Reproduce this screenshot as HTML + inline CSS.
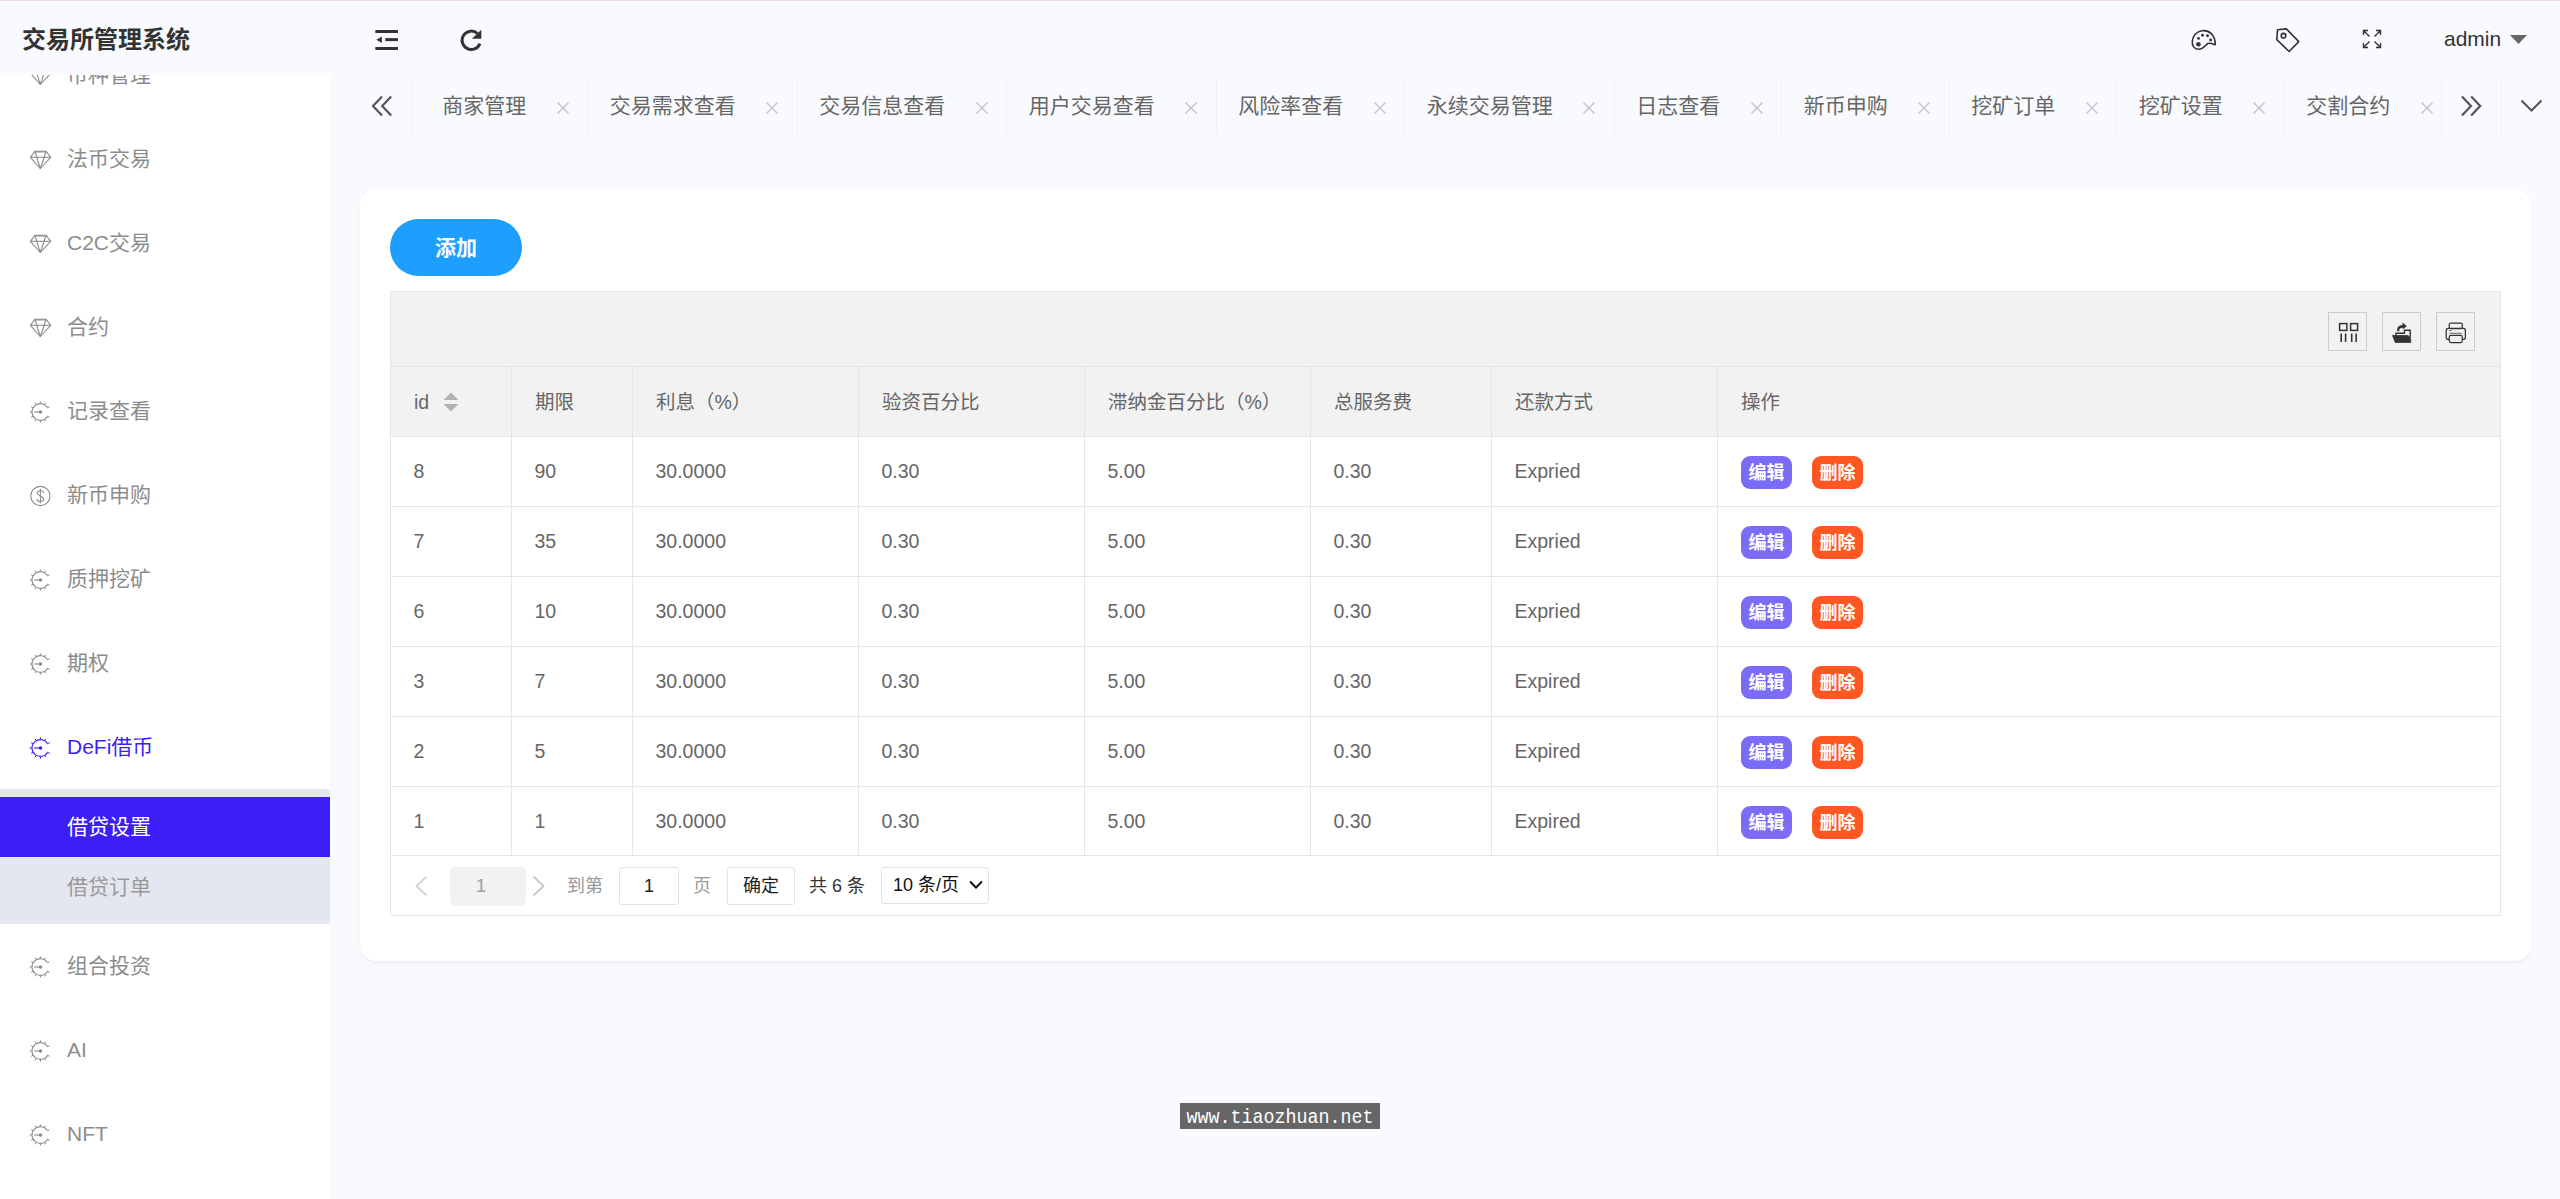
<!DOCTYPE html><html lang="zh-CN"><head><meta charset="utf-8"><title>交易所管理系统</title><style>
*{box-sizing:border-box;margin:0;padding:0}
html,body{width:2560px;height:1199px;overflow:hidden}
body{background:#f9fafe;font-family:"Liberation Sans", "Noto Sans CJK SC", sans-serif;font-size:21px;color:#666;position:relative}
.abs{position:absolute}
#topline{left:0;top:0;width:2560px;height:1px;background:#f1dcdf}
#side{left:0;top:75px;width:330px;height:1124px;background:#fff;overflow:hidden}
#logo{left:22px;top:21.5px;height:36px;line-height:36px;font-size:24px;font-weight:700;color:#333;white-space:nowrap}
.mi{position:absolute;left:0;width:330px;height:84px;line-height:84px;color:#8c8c8c;font-size:21px;white-space:nowrap}
.mi .tx{position:absolute;left:67px;top:0}
.mi svg{position:absolute;left:28px;top:30px;width:24px;height:24px;overflow:visible}
.mi.on{color:#3c1ff5}
#sub{left:0;top:714px;width:330px;height:135px;background:#e4e7f0;border-radius:0 3px 3px 0}
#sub .it{position:absolute;left:0;width:330px;height:60px;line-height:60px;padding-left:67px;font-size:21px;color:#999;white-space:nowrap}
#sub .it.act{background:#3c1ff5;color:#fff}
.tab{position:absolute;top:76px;height:59px;line-height:59px;font-size:21px;color:#666;white-space:nowrap}
.vl{position:absolute;top:76px;height:59px;width:1px;background:#f2f2f5}
.cx{position:absolute;top:102px;width:12px;height:12px}
#card{left:360px;top:189px;width:2171px;height:772px;background:#fff;border-radius:16px;box-shadow:0 1.5px 3px rgba(0,0,0,.05)}
#add{left:390px;top:219px;width:132px;height:57px;border-radius:29px;background:#1e9fff;color:#fff;font-size:21px;font-weight:700;text-align:center;line-height:57px}
#tbl{left:390px;top:291px;width:2111px;height:625px;border:1px solid #e6e6e6;background:#fff}
.hl{position:absolute;left:391px;width:2109px;height:1px;background:#e6e6e6}
.cl{position:absolute;top:366px;width:1px;height:489px;background:#e6e6e6}
#thbg{left:391px;top:292px;width:2109px;height:144px;background:#f2f2f2}
.c{position:absolute;height:70px;line-height:70px;font-size:19.5px;color:#666;white-space:nowrap}
.btn{position:absolute;width:51px;height:33px;border-radius:9px;color:#fff;font-size:18px;font-weight:700;text-align:center;line-height:34px;white-space:nowrap}
.be{background:#7a6cf6}
.bd{background:#ff5722}
.tool{position:absolute;top:312px;width:39px;height:39px;border:1px solid #ccc}
.tool svg{position:absolute;left:-1px;top:-1px;width:39px;height:39px}
.pg{position:absolute;font-size:18px;white-space:nowrap;height:38px;line-height:38px;top:867px}
#wm{left:1180px;top:1103px;width:200px;height:26px;background:#666;overflow:hidden}
#wm span{position:absolute;left:0;top:2.5px;width:200px;height:26px;color:#fff;font-family:"Liberation Mono",monospace;font-size:18.33px;line-height:26px;text-align:center;white-space:nowrap;transform:scaleY(1.15);transform-origin:50% 70%}
</style></head><body>
<div id="topline" class="abs"></div>
<div id="logo" class="abs">交易所管理系统</div>
<div id="side" class="abs">
<div class="mi" style="top:-42px"><svg viewBox="0 0 24 24" fill="none" stroke="currentColor" stroke-width="1.1" stroke-linejoin="round"><path d="M6.900 4.300H18.150L22.700 10.300 12.300 21.500 2.400 10.300z"/><path d="M6.900 4.900H18.150" stroke-width="1.2"/><path d="M2.400 10.300H22.700"/><path d="M6.900 4.300L12.300 21.500 18.150 4.300"/></svg><span class="tx">币种管理</span></div>
<div class="mi" style="top:42px"><svg viewBox="0 0 24 24" fill="none" stroke="currentColor" stroke-width="1.1" stroke-linejoin="round"><path d="M6.900 4.300H18.150L22.700 10.300 12.300 21.500 2.400 10.300z"/><path d="M6.900 4.900H18.150" stroke-width="1.2"/><path d="M2.400 10.300H22.700"/><path d="M6.900 4.300L12.300 21.500 18.150 4.300"/></svg><span class="tx">法币交易</span></div>
<div class="mi" style="top:126px"><svg viewBox="0 0 24 24" fill="none" stroke="currentColor" stroke-width="1.1" stroke-linejoin="round"><path d="M6.900 4.300H18.150L22.700 10.300 12.300 21.500 2.400 10.300z"/><path d="M6.900 4.900H18.150" stroke-width="1.2"/><path d="M2.400 10.300H22.700"/><path d="M6.900 4.300L12.300 21.500 18.150 4.300"/></svg><span class="tx">C2C交易</span></div>
<div class="mi" style="top:210px"><svg viewBox="0 0 24 24" fill="none" stroke="currentColor" stroke-width="1.1" stroke-linejoin="round"><path d="M6.900 4.300H18.150L22.700 10.300 12.300 21.500 2.400 10.300z"/><path d="M6.900 4.900H18.150" stroke-width="1.2"/><path d="M2.400 10.300H22.700"/><path d="M6.900 4.300L12.300 21.500 18.150 4.300"/></svg><span class="tx">合约</span></div>
<div class="mi" style="top:294px"><svg viewBox="0 0 24 24" fill="none" stroke="currentColor" stroke-width="1.1"><path d="M19.67 17.20A8.4 8.4 0 1 1 19.67 8.80"/><path d="M19.67 17.20L21.67 18.35M16.60 20.27L17.75 22.27M12.40 21.40L12.40 23.70M8.20 20.27L7.05 22.27M5.13 17.20L3.13 18.35M4.00 13.00L1.70 13.00M5.13 8.80L3.13 7.65M8.20 5.73L7.05 3.73M12.40 4.60L12.40 2.30M16.60 5.73L17.75 3.73M19.67 8.80L21.67 7.65" stroke-width="1"/><path d="M6.10 13.0H12.4" stroke-width="1.5" opacity=".75"/><circle cx="12.5" cy="13.0" r="1.8" fill="currentColor" stroke="none"/></svg><span class="tx">记录查看</span></div>
<div class="mi" style="top:378px"><svg viewBox="0 0 24 24" fill="none" stroke="currentColor" stroke-width="1.1"><circle cx="12.4" cy="13" r="9.650"/><g transform="translate(12.4 13)"><path d="M3.100 -2.900C3.100 -4.500 1.700 -5.300 0 -5.300C-1.800 -5.300 -3.100 -4.400 -3.100 -2.900C-3.100 -1.100 -1.300 -0.600 0 0C1.700 0.800 3.300 1.400 3.300 3.100C3.300 4.700 1.800 5.500 0 5.500C-1.800 5.500 -3.300 4.700 -3.300 2.900"/><path d="M0 -7.100V7.400" stroke-width="1"/></g></svg><span class="tx">新币申购</span></div>
<div class="mi" style="top:462px"><svg viewBox="0 0 24 24" fill="none" stroke="currentColor" stroke-width="1.1"><path d="M19.67 17.20A8.4 8.4 0 1 1 19.67 8.80"/><path d="M19.67 17.20L21.67 18.35M16.60 20.27L17.75 22.27M12.40 21.40L12.40 23.70M8.20 20.27L7.05 22.27M5.13 17.20L3.13 18.35M4.00 13.00L1.70 13.00M5.13 8.80L3.13 7.65M8.20 5.73L7.05 3.73M12.40 4.60L12.40 2.30M16.60 5.73L17.75 3.73M19.67 8.80L21.67 7.65" stroke-width="1"/><path d="M6.10 13.0H12.4" stroke-width="1.5" opacity=".75"/><circle cx="12.5" cy="13.0" r="1.8" fill="currentColor" stroke="none"/></svg><span class="tx">质押挖矿</span></div>
<div class="mi" style="top:546px"><svg viewBox="0 0 24 24" fill="none" stroke="currentColor" stroke-width="1.1"><path d="M19.67 17.20A8.4 8.4 0 1 1 19.67 8.80"/><path d="M19.67 17.20L21.67 18.35M16.60 20.27L17.75 22.27M12.40 21.40L12.40 23.70M8.20 20.27L7.05 22.27M5.13 17.20L3.13 18.35M4.00 13.00L1.70 13.00M5.13 8.80L3.13 7.65M8.20 5.73L7.05 3.73M12.40 4.60L12.40 2.30M16.60 5.73L17.75 3.73M19.67 8.80L21.67 7.65" stroke-width="1"/><path d="M6.10 13.0H12.4" stroke-width="1.5" opacity=".75"/><circle cx="12.5" cy="13.0" r="1.8" fill="currentColor" stroke="none"/></svg><span class="tx">期权</span></div>
<div class="mi on" style="top:630px"><svg viewBox="0 0 24 24" fill="none" stroke="currentColor" stroke-width="1.1"><path d="M19.67 17.20A8.4 8.4 0 1 1 19.67 8.80"/><path d="M19.67 17.20L21.67 18.35M16.60 20.27L17.75 22.27M12.40 21.40L12.40 23.70M8.20 20.27L7.05 22.27M5.13 17.20L3.13 18.35M4.00 13.00L1.70 13.00M5.13 8.80L3.13 7.65M8.20 5.73L7.05 3.73M12.40 4.60L12.40 2.30M16.60 5.73L17.75 3.73M19.67 8.80L21.67 7.65" stroke-width="1"/><path d="M6.10 13.0H12.4" stroke-width="1.5" opacity=".75"/><circle cx="12.5" cy="13.0" r="1.8" fill="currentColor" stroke="none"/></svg><span class="tx">DeFi借币</span></div>
<div class="mi" style="top:849px"><svg viewBox="0 0 24 24" fill="none" stroke="currentColor" stroke-width="1.1"><path d="M19.67 17.20A8.4 8.4 0 1 1 19.67 8.80"/><path d="M19.67 17.20L21.67 18.35M16.60 20.27L17.75 22.27M12.40 21.40L12.40 23.70M8.20 20.27L7.05 22.27M5.13 17.20L3.13 18.35M4.00 13.00L1.70 13.00M5.13 8.80L3.13 7.65M8.20 5.73L7.05 3.73M12.40 4.60L12.40 2.30M16.60 5.73L17.75 3.73M19.67 8.80L21.67 7.65" stroke-width="1"/><path d="M6.10 13.0H12.4" stroke-width="1.5" opacity=".75"/><circle cx="12.5" cy="13.0" r="1.8" fill="currentColor" stroke="none"/></svg><span class="tx">组合投资</span></div>
<div class="mi" style="top:933px"><svg viewBox="0 0 24 24" fill="none" stroke="currentColor" stroke-width="1.1"><path d="M19.67 17.20A8.4 8.4 0 1 1 19.67 8.80"/><path d="M19.67 17.20L21.67 18.35M16.60 20.27L17.75 22.27M12.40 21.40L12.40 23.70M8.20 20.27L7.05 22.27M5.13 17.20L3.13 18.35M4.00 13.00L1.70 13.00M5.13 8.80L3.13 7.65M8.20 5.73L7.05 3.73M12.40 4.60L12.40 2.30M16.60 5.73L17.75 3.73M19.67 8.80L21.67 7.65" stroke-width="1"/><path d="M6.10 13.0H12.4" stroke-width="1.5" opacity=".75"/><circle cx="12.5" cy="13.0" r="1.8" fill="currentColor" stroke="none"/></svg><span class="tx">AI</span></div>
<div class="mi" style="top:1017px"><svg viewBox="0 0 24 24" fill="none" stroke="currentColor" stroke-width="1.1"><path d="M19.67 17.20A8.4 8.4 0 1 1 19.67 8.80"/><path d="M19.67 17.20L21.67 18.35M16.60 20.27L17.75 22.27M12.40 21.40L12.40 23.70M8.20 20.27L7.05 22.27M5.13 17.20L3.13 18.35M4.00 13.00L1.70 13.00M5.13 8.80L3.13 7.65M8.20 5.73L7.05 3.73M12.40 4.60L12.40 2.30M16.60 5.73L17.75 3.73M19.67 8.80L21.67 7.65" stroke-width="1"/><path d="M6.10 13.0H12.4" stroke-width="1.5" opacity=".75"/><circle cx="12.5" cy="13.0" r="1.8" fill="currentColor" stroke="none"/></svg><span class="tx">NFT</span></div>
<div id="sub" class="abs"><div class="it act" style="top:8px">借贷设置</div><div class="it" style="top:68px">借贷订单</div></div>
</div>
<svg class="abs" style="left:372px;top:26px;width:30px;height:28px" viewBox="0 0 30 28"><g fill="#333"><rect x="3.3" y="4" width="22.7" height="3"/><rect x="13.3" y="12.1" width="12.7" height="3"/><rect x="3.3" y="21" width="22.7" height="3"/><path d="M4.4 13.7L9.8 10.6v6.3z"/></g></svg>
<svg class="abs" style="left:458px;top:26px;width:28px;height:28px" viewBox="0 0 28 28"><path d="M21.9 17.6A9.2 9.2 0 1 1 19.5 7.5" fill="none" stroke="#333" stroke-width="3"/><path d="M23.3 3.7v9.1h-9.4z" fill="#333"/></svg>
<svg class="abs" style="left:2190px;top:28px;width:28px;height:24px" viewBox="0 0 28 24" fill="none" stroke="#333" stroke-width="1.6" stroke-linejoin="round"><path d="M12 2.800c7 -1 13.200 4 13.300 13.700c-1.600 .9-3.600 -2.400-7.300 -.9c-3 1.300-3.500 5.600-9.500 5.600c-4.500 0-6.500-3.500-6.200-8c.3-5.400 4.400-9.700 9.700-10.400z"/><circle cx="8.400" cy="16.300" r="2.300" fill="#333" stroke="none"/><circle cx="8.500" cy="10.400" r="1.450" fill="#333" stroke="none"/><circle cx="12.500" cy="7.300" r="1.450" fill="#333" stroke="none"/><circle cx="17.500" cy="7.800" r="1.450" fill="#333" stroke="none"/><circle cx="20.600" cy="12" r="1.450" fill="#333" stroke="none"/></svg>
<svg class="abs" style="left:2274px;top:26px;width:28px;height:28px" viewBox="0 0 28 28" fill="none" stroke="#333" stroke-width="1.6" stroke-linejoin="round"><path d="M3.500 3.700l8.800-.8l12.500 12.700l-9.700 9.900l-12.300-11.800z"/><circle cx="9.500" cy="9.700" r="2.300"/></svg>
<svg class="abs" style="left:2361px;top:28px;width:22px;height:22px" viewBox="0 0 22 22" fill="none" stroke="#333" stroke-width="1.4"><path d="M2.500 7V2.500h4.500M2.500 2.500l6 6M15 2.500h4.500V7M19.500 2.500l-6 6M2.500 15v4.500h4.500M2.500 19.500l6-6M19.500 15v4.500H15M19.500 19.500l-6-6"/></svg>
<div class="abs" style="left:2444px;top:21px;height:36px;line-height:36px;font-size:21px;color:#333">admin</div>
<svg class="abs" style="left:2509.500px;top:34.500px;width:17px;height:9px" viewBox="0 0 16 9" preserveAspectRatio="none"><path d="M0 0h16l-8 9z" fill="#666"/></svg>
<svg class="abs" style="left:371px;top:95px;width:24px;height:22px" viewBox="0 0 24 22" fill="none" stroke="#555" stroke-width="2.2"><path d="M11 1.500L2 11l9 9.500M20.200 1.500L11.200 11l9 9.500"/></svg>
<div class="vl" style="left:412.0px"></div>
<div class="tab" style="left:442.3px">商家管理</div>
<svg class="cx" style="left:556.5px" viewBox="0 0 12 12"><path d="M0.500 0.500l11 11M11.500 0.500L0.500 11.500" stroke="#c2c2c2" stroke-width="1.3" fill="none"/></svg>
<div class="vl" style="left:587.3px"></div>
<div class="tab" style="left:609.8px">交易需求查看</div>
<svg class="cx" style="left:766.0px" viewBox="0 0 12 12"><path d="M0.500 0.500l11 11M11.500 0.500L0.500 11.500" stroke="#c2c2c2" stroke-width="1.3" fill="none"/></svg>
<div class="vl" style="left:796.8px"></div>
<div class="tab" style="left:819.3px">交易信息查看</div>
<svg class="cx" style="left:975.5px" viewBox="0 0 12 12"><path d="M0.500 0.500l11 11M11.500 0.500L0.500 11.500" stroke="#c2c2c2" stroke-width="1.3" fill="none"/></svg>
<div class="vl" style="left:1006.3px"></div>
<div class="tab" style="left:1028.8px">用户交易查看</div>
<svg class="cx" style="left:1185.0px" viewBox="0 0 12 12"><path d="M0.500 0.500l11 11M11.500 0.500L0.500 11.500" stroke="#c2c2c2" stroke-width="1.3" fill="none"/></svg>
<div class="vl" style="left:1215.8px"></div>
<div class="tab" style="left:1238.3px">风险率查看</div>
<svg class="cx" style="left:1373.5px" viewBox="0 0 12 12"><path d="M0.500 0.500l11 11M11.500 0.500L0.500 11.500" stroke="#c2c2c2" stroke-width="1.3" fill="none"/></svg>
<div class="vl" style="left:1404.3px"></div>
<div class="tab" style="left:1426.8px">永续交易管理</div>
<svg class="cx" style="left:1583.0px" viewBox="0 0 12 12"><path d="M0.500 0.500l11 11M11.500 0.500L0.500 11.500" stroke="#c2c2c2" stroke-width="1.3" fill="none"/></svg>
<div class="vl" style="left:1613.8px"></div>
<div class="tab" style="left:1636.3px">日志查看</div>
<svg class="cx" style="left:1750.5px" viewBox="0 0 12 12"><path d="M0.500 0.500l11 11M11.500 0.500L0.500 11.500" stroke="#c2c2c2" stroke-width="1.3" fill="none"/></svg>
<div class="vl" style="left:1781.3px"></div>
<div class="tab" style="left:1803.8px">新币申购</div>
<svg class="cx" style="left:1918.0px" viewBox="0 0 12 12"><path d="M0.500 0.500l11 11M11.500 0.500L0.500 11.500" stroke="#c2c2c2" stroke-width="1.3" fill="none"/></svg>
<div class="vl" style="left:1948.8px"></div>
<div class="tab" style="left:1971.3px">挖矿订单</div>
<svg class="cx" style="left:2085.5px" viewBox="0 0 12 12"><path d="M0.500 0.500l11 11M11.500 0.500L0.500 11.500" stroke="#c2c2c2" stroke-width="1.3" fill="none"/></svg>
<div class="vl" style="left:2116.3px"></div>
<div class="tab" style="left:2138.8px">挖矿设置</div>
<svg class="cx" style="left:2253.0px" viewBox="0 0 12 12"><path d="M0.500 0.500l11 11M11.500 0.500L0.500 11.500" stroke="#c2c2c2" stroke-width="1.3" fill="none"/></svg>
<div class="vl" style="left:2283.8px"></div>
<div class="tab" style="left:2306.3px">交割合约</div>
<svg class="cx" style="left:2420.5px" viewBox="0 0 12 12"><path d="M0.500 0.500l11 11M11.500 0.500L0.500 11.500" stroke="#c2c2c2" stroke-width="1.3" fill="none"/></svg>
<div class="vl" style="left:2441px"></div><div class="vl" style="left:2501px"></div>
<svg class="abs" style="left:2459px;top:95px;width:24px;height:22px" viewBox="0 0 24 22" fill="none" stroke="#555" stroke-width="2.2"><path d="M3 1.500L12 11l-9 9.500M12.200 1.500L21.200 11l-9 9.500"/></svg>
<svg class="abs" style="left:2520px;top:99px;width:24px;height:14px" viewBox="0 0 24 14" fill="none" stroke="#555" stroke-width="2"><path d="M1.500 1.500L11.500 11.500l10-10"/></svg>
<div id="card" class="abs"></div>
<div id="add" class="abs">添加</div>
<div id="tbl" class="abs"></div>
<div id="thbg" class="abs"></div>
<div class="hl" style="top:366px"></div>
<div class="hl" style="top:436px"></div>
<div class="hl" style="top:506px"></div>
<div class="hl" style="top:576px"></div>
<div class="hl" style="top:646px"></div>
<div class="hl" style="top:716px"></div>
<div class="hl" style="top:786px"></div>
<div class="hl" style="top:855px"></div>
<div class="cl" style="left:511px"></div>
<div class="cl" style="left:632px"></div>
<div class="cl" style="left:858px"></div>
<div class="cl" style="left:1084px"></div>
<div class="cl" style="left:1310px"></div>
<div class="cl" style="left:1491px"></div>
<div class="cl" style="left:1717px"></div>
<div class="tool" style="left:2328px"><svg viewBox="0 0 39 39" fill="none" stroke="#333" stroke-width="1.5"><rect x="11.600" y="11.600" width="7.300" height="6.800"/><rect x="22.600" y="11.600" width="7" height="6.800"/><path d="M13.200 21.500v8.500M17.600 21.500v8.500M23.700 21.500v8.500M28.100 21.500v8.500" stroke-width="1.6"/></svg></div>
<div class="tool" style="left:2382px"><svg viewBox="0 0 39 39"><path d="M10.500 23.500H25.300Q26.600 23.500 27.200 24.800L28.700 27.500V30.400H13.200z" fill="#333" stroke="#333" stroke-width="0.8" stroke-linejoin="round"/><path d="M13.900 23.600V21.300H22.500V18.200H28.200V26.500" fill="none" stroke="#333" stroke-width="1.400" stroke-linejoin="round"/><path d="M15.300 19.300C14.600 15.400 17 13.200 20.500 13.100V10.600L24.800 14.100 20.800 17.500V15.800C18.300 15.800 17 16.600 17.300 19.300z" fill="#333"/></svg></div>
<div class="tool" style="left:2436px"><svg viewBox="0 0 39 39" fill="none" stroke="#333" stroke-width="1.25"><rect x="13.200" y="11.200" width="13.100" height="5.400" rx="1.500"/><rect x="10.200" y="16.400" width="19.200" height="11" rx="2.200"/><rect x="13.200" y="23.400" width="13.100" height="7.200" rx="1.800" fill="#f2f2f2"/><path d="M13.300 18.500h2.400" stroke-width="0.9" stroke="#555"/><path d="M13.300 21.300h12.500" stroke-width="0.9" stroke="#555"/></svg></div>
<div class="c" style="left:414px;top:366.5px">id</div>
<div class="c" style="left:535px;top:366.5px">期限</div>
<div class="c" style="left:656px;top:366.5px">利息（%）</div>
<div class="c" style="left:882px;top:366.5px">验资百分比</div>
<div class="c" style="left:1108px;top:366.5px">滞纳金百分比（%）</div>
<div class="c" style="left:1334px;top:366.5px">总服务费</div>
<div class="c" style="left:1515px;top:366.5px">还款方式</div>
<div class="c" style="left:1741px;top:366.5px">操作</div>
<svg class="abs" style="left:443px;top:392px;width:16px;height:20px" viewBox="0 0 16 20"><path d="M0.500 8L8 0.500 15.500 8zM0.500 12L8 19.500 15.500 12z" fill="#b2b2b2"/></svg>
<div class="c" style="left:413.5px;top:435.7px">8</div>
<div class="c" style="left:534.5px;top:435.7px">90</div>
<div class="c" style="left:655.5px;top:435.7px">30.0000</div>
<div class="c" style="left:881.5px;top:435.7px">0.30</div>
<div class="c" style="left:1107.5px;top:435.7px">5.00</div>
<div class="c" style="left:1333.5px;top:435.7px">0.30</div>
<div class="c" style="left:1514.5px;top:435.7px">Expried</div>
<div class="btn be" style="left:1741px;top:456px">编辑</div>
<div class="btn bd" style="left:1812px;top:456px">删除</div>
<div class="c" style="left:413.5px;top:505.7px">7</div>
<div class="c" style="left:534.5px;top:505.7px">35</div>
<div class="c" style="left:655.5px;top:505.7px">30.0000</div>
<div class="c" style="left:881.5px;top:505.7px">0.30</div>
<div class="c" style="left:1107.5px;top:505.7px">5.00</div>
<div class="c" style="left:1333.5px;top:505.7px">0.30</div>
<div class="c" style="left:1514.5px;top:505.7px">Expried</div>
<div class="btn be" style="left:1741px;top:526px">编辑</div>
<div class="btn bd" style="left:1812px;top:526px">删除</div>
<div class="c" style="left:413.5px;top:575.7px">6</div>
<div class="c" style="left:534.5px;top:575.7px">10</div>
<div class="c" style="left:655.5px;top:575.7px">30.0000</div>
<div class="c" style="left:881.5px;top:575.7px">0.30</div>
<div class="c" style="left:1107.5px;top:575.7px">5.00</div>
<div class="c" style="left:1333.5px;top:575.7px">0.30</div>
<div class="c" style="left:1514.5px;top:575.7px">Expried</div>
<div class="btn be" style="left:1741px;top:596px">编辑</div>
<div class="btn bd" style="left:1812px;top:596px">删除</div>
<div class="c" style="left:413.5px;top:645.7px">3</div>
<div class="c" style="left:534.5px;top:645.7px">7</div>
<div class="c" style="left:655.5px;top:645.7px">30.0000</div>
<div class="c" style="left:881.5px;top:645.7px">0.30</div>
<div class="c" style="left:1107.5px;top:645.7px">5.00</div>
<div class="c" style="left:1333.5px;top:645.7px">0.30</div>
<div class="c" style="left:1514.5px;top:645.7px">Expired</div>
<div class="btn be" style="left:1741px;top:666px">编辑</div>
<div class="btn bd" style="left:1812px;top:666px">删除</div>
<div class="c" style="left:413.5px;top:715.7px">2</div>
<div class="c" style="left:534.5px;top:715.7px">5</div>
<div class="c" style="left:655.5px;top:715.7px">30.0000</div>
<div class="c" style="left:881.5px;top:715.7px">0.30</div>
<div class="c" style="left:1107.5px;top:715.7px">5.00</div>
<div class="c" style="left:1333.5px;top:715.7px">0.30</div>
<div class="c" style="left:1514.5px;top:715.7px">Expired</div>
<div class="btn be" style="left:1741px;top:736px">编辑</div>
<div class="btn bd" style="left:1812px;top:736px">删除</div>
<div class="c" style="left:413.5px;top:785.7px">1</div>
<div class="c" style="left:534.5px;top:785.7px">1</div>
<div class="c" style="left:655.5px;top:785.7px">30.0000</div>
<div class="c" style="left:881.5px;top:785.7px">0.30</div>
<div class="c" style="left:1107.5px;top:785.7px">5.00</div>
<div class="c" style="left:1333.5px;top:785.7px">0.30</div>
<div class="c" style="left:1514.5px;top:785.7px">Expired</div>
<div class="btn be" style="left:1741px;top:806px">编辑</div>
<div class="btn bd" style="left:1812px;top:806px">删除</div>
<svg class="abs" style="left:414px;top:875px;width:14px;height:22px" viewBox="0 0 14 22" fill="none" stroke="#d2d2d2" stroke-width="1.8"><path d="M12.500 1.500L2.500 11l10 9.500"/></svg>
<div class="pg" style="left:450px;width:76px;height:39px;background:#f2f2f2;border-radius:5px;padding-left:26px;color:#a0a0a0">1</div>
<svg class="abs" style="left:532px;top:875px;width:14px;height:22px" viewBox="0 0 14 22" fill="none" stroke="#c8c8c8" stroke-width="1.8"><path d="M1.500 1.500L11.500 11l-10 9.500"/></svg>
<div class="pg" style="left:567px;color:#999">到第</div>
<div class="pg" style="left:619px;width:60px;border:1px solid #e2e2e2;border-radius:3px;text-align:center;color:#222;background:#fff;line-height:36px">1</div>
<div class="pg" style="left:693px;color:#999">页</div>
<div class="pg" style="left:727px;width:68px;border:1px solid #e2e2e2;border-radius:3px;text-align:center;color:#222;background:#fff;line-height:36px">确定</div>
<div class="pg" style="left:809px;color:#333">共 6 条</div>
<div class="pg" style="left:881px;width:108px;height:37px;border:1px solid #e2e2e2;border-radius:3px;color:#111;background:#fff;line-height:35px;padding-left:11px">10 条/页</div>
<svg class="abs" style="left:969px;top:880px;width:14px;height:10px" viewBox="0 0 14 10" fill="none" stroke="#111" stroke-width="2"><path d="M1 1.500l6 6 6-6"/></svg>
<div id="wm" class="abs"><span>www.tiaozhuan.net</span></div>
</body></html>
